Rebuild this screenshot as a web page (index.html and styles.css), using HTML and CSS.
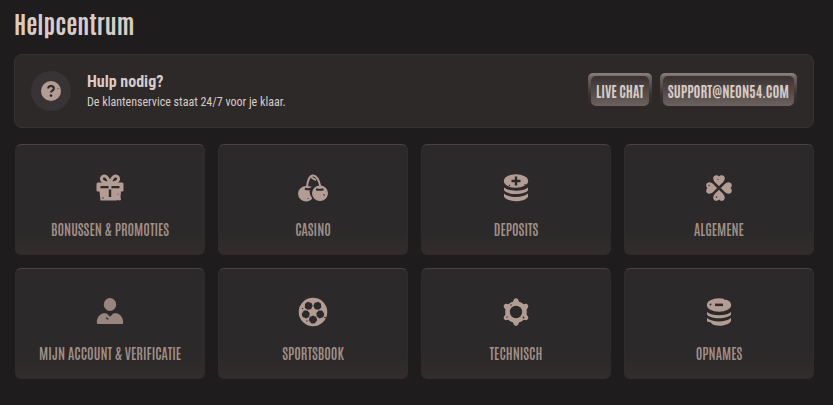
FILE: index.html
```
<!DOCTYPE html>
<html lang="nl">
<head>
    <meta charset="UTF-8">
    <meta name="viewport" content="width=device-width, initial-scale=1.0">
    <title>Helpcentrum</title>
    <link rel="stylesheet" href="styles.css">
</head>
<body>
    <main class="help-center">
        <h1 class="title">Helpcentrum</h1>

        <section class="support">
            <div class="support-icon">
                <svg viewBox="0 0 20 20" width="20" height="20" aria-hidden="true">
                    <circle class="fill" cx="10" cy="10" r="10"/>
                    <path class="cut-line" d="M7.2 7.6C7.2 5.7 8.4 4.9 10 4.9s2.9.9 2.9 2.5c0 1.9-2.8 2.1-2.8 4.2"/>
                    <circle class="cut" cx="10" cy="14.6" r="1.3"/>
                    <circle class="cut" cx="17" cy="7.5" r=".5"/>
                </svg>
            </div>
            <div class="support-text">
                <h2 class="support-title">Hulp nodig?</h2>
                <p class="support-note">De klantenservice staat 24/7 voor je klaar.</p>
            </div>
            <div class="support-actions">
                <button type="button" class="btn"><span class="btn-face">LIVE CHAT</span></button>
                <button type="button" class="btn"><span class="btn-face">SUPPORT@NEON54.COM</span></button>
            </div>
        </section>

        <nav class="topics">
            <a class="card" href="#bonussen">
                <svg class="icon" viewBox="0 0 30 30" aria-hidden="true">
                    <path class="line" d="M14.5 10C10 10 6 8.500 6.500 5.200 7.500 1.500 12.800 2 14.500 10M15.500 10C20 10 24 8.500 23.500 5.200 22.500 1.500 17.200 2 15.500 10"/>
                    <path class="fill" d="M3 9.500h24a1.500 1.500 0 0 1 1.500 1.500v6.500a1 1 0 0 1-1 1H26l-.5 5.500.5 3-2 .6-1-.6-2 .5H5.500L4.500 18.500h-2a1 1 0 0 1-1-1V11A1.500 1.500 0 0 1 3 9.500z"/>
                    <path class="cut" d="M5.500 13h8v2.300h-8zM16.500 13h8v2.300h-8zM13.800 16.500h2.400V24h-2.400z"/>
                    <circle class="cut" cx="8" cy="25" r=".7"/>
                    <circle class="cut" cx="23" cy="21" r=".5"/>
                </svg>
                <span class="label">BONUSSEN &amp; PROMOTIES</span>
            </a>
            <a class="card" href="#casino">
                <svg class="icon" viewBox="0 0 30 30" aria-hidden="true">
                    <path class="line thin" d="M9 14C9.500 9 10.500 3 14.500 2.500 19 2 21 7 22.500 14"/>
                    <path class="line thin" d="M13 3.500c.8 1.500 2 2.500 5 3.500"/>
                    <path class="fill" d="M7.500 13c2 0 3.800.4 6 .6-1.800 2.200-2.300 4.700-1.500 7.500.5 1.800 1.200 2.900 2.400 4.100-1 2-3.500 3.200-6.400 3.200A7.700 7.700 0 1 1 7.500 13z"/>
                    <ellipse class="fill" cx="22" cy="20.300" rx="8" ry="7.700"/>
                    <path class="cut-line" d="M7 15.500c2 1 4 1 6 0M18 16.200c2.600.9 5 .9 7.500 0"/>
                    <circle class="cut" cx="26" cy="22" r=".8"/>
                    <circle class="cut" cx="10" cy="25.500" r=".6"/>
                </svg>
                <span class="label">CASINO</span>
            </a>
            <a class="card" href="#deposits">
                <svg class="icon" viewBox="0 0 30 30" aria-hidden="true">
                    <ellipse class="fill" cx="15" cy="8" rx="12.200" ry="6.800"/>
                    <path class="fill" d="M3 14.500c5 4.300 19 4.300 24 0v2.800c-3.500 5-20.500 5-24 0zM3 20.500c5 4.600 19 4.600 24 0v3.200c-3.500 6-20.500 6-24 0z"/>
                    <path class="cut" d="M13.800 3.500h2.400v3.300H19.500v2.400h-3.300v3.300h-2.400V9.200H10.500V6.800h3.300z"/>
                    <circle class="cut" cx="8.500" cy="12.500" r=".7"/>
                    <circle class="cut" cx="24" cy="11.800" r=".8"/>
                </svg>
                <span class="label">DEPOSITS</span>
            </a>
            <a class="card" href="#algemene">
                <svg class="icon" viewBox="0 0 30 30" aria-hidden="true">
                    <path class="fill" id="leaf" d="M15 13.500C13.800 11.300 9.200 9 9.200 5.300 9.200 2 13.200 1.200 15 3.500 16.800 1.200 20.800 2 20.800 5.300 20.800 9 16.200 11.300 15 13.500z"/>
                    <use href="#leaf" transform="rotate(90 15 15)"/>
                    <use href="#leaf" transform="rotate(180 15 15)"/>
                    <use href="#leaf" transform="rotate(270 15 15)"/>
                    <circle class="cut" cx="14" cy="6.500" r=".6"/>
                    <circle class="cut" cx="5" cy="12.500" r=".7"/>
                    <circle class="cut" cx="12.500" cy="24" r=".8"/>
                </svg>
                <span class="label">ALGEMENE</span>
            </a>
            <a class="card" href="#account">
                <svg class="icon dim" viewBox="0 0 30 30" aria-hidden="true">
                    <ellipse class="fill" cx="15" cy="7.500" rx="6.200" ry="6.500"/>
                    <path class="fill" d="M9 16.200c1.200 0 2.200 0 3 .6l3 3 3-3c.8-.6 1.800-.6 3-.6 4.500.5 7.200 4.500 7.200 9.300 0 1-.7 1.500-1.700 1.500H3.500c-1 0-1.700-.5-1.700-1.500 0-4.800 2.700-8.800 7.200-9.300z"/>
                    <path class="cut" d="M11 20.300l2.700 1.200-.6 1.200-2.200-1.200z"/>
                </svg>
                <span class="label">MIJN ACCOUNT &amp; VERIFICATIE</span>
            </a>
            <a class="card" href="#sportsbook">
                <svg class="icon" viewBox="0 0 30 30" aria-hidden="true">
                    <circle class="fill" cx="15" cy="15" r="14.300"/>
                    <path class="cut" id="patch" d="M11.800 20l3.200-1.500 3.200 1.500 1 3.200-2.600 3.200h-3.200L10.800 23.200z"/>
                    <use href="#patch" transform="rotate(72 15 15)"/>
                    <use href="#patch" transform="rotate(144 15 15)"/>
                    <use href="#patch" transform="rotate(216 15 15)"/>
                    <use href="#patch" transform="rotate(288 15 15)"/>
                    <circle class="cut" cx="9" cy="24" r=".7"/>
                    <circle class="cut" cx="4.500" cy="11.500" r=".7"/>
                    <circle class="cut" cx="27" cy="20.500" r=".8"/>
                </svg>
                <span class="label">SPORTSBOOK</span>
            </a>
            <a class="card" href="#technisch">
                <svg class="icon" viewBox="0 0 30 30" aria-hidden="true">
                    <circle class="fill" cx="15" cy="15" r="10.800"/>
                    <path class="fill" id="tooth" d="M9 7c2.500-.8 3-2 3.500-3.800C13.200.5 16.800.5 17.500 3.200 18 5 18.500 6.200 21 7z"/>
                    <use href="#tooth" transform="rotate(60 15 15)"/>
                    <use href="#tooth" transform="rotate(120 15 15)"/>
                    <use href="#tooth" transform="rotate(180 15 15)"/>
                    <use href="#tooth" transform="rotate(240 15 15)"/>
                    <use href="#tooth" transform="rotate(300 15 15)"/>
                    <circle class="cut" cx="15" cy="15" r="6.200"/>
                    <circle class="cut" cx="10" cy="8" r=".7"/>
                    <circle class="cut" cx="22.500" cy="20.500" r=".9"/>
                    <circle class="cut" cx="6" cy="20" r=".7"/>
                </svg>
                <span class="label">TECHNISCH</span>
            </a>
            <a class="card" href="#opnames">
                <svg class="icon" viewBox="0 0 30 30" aria-hidden="true">
                    <ellipse class="fill" cx="15" cy="8" rx="12.200" ry="6.800"/>
                    <path class="fill" d="M3 15c5 4.300 19 4.300 24 0v2.500c-3.500 5-20.500 5-24 0zM3 21c5 4.600 19 4.600 24 0v3c-3 5.500-15 5.700-19 3l-1-1.500-4-1z"/>
                    <path class="cut" d="M11 6.600h8v2.500h-8z"/>
                    <circle class="cut" cx="6.500" cy="7.500" r=".9"/>
                    <circle class="cut" cx="21" cy="2.200" r=".8"/>
                </svg>
                <span class="label">OPNAMES</span>
            </a>
        </nav>
    </main>
</body>
</html>
```
FILE: styles.css
```
* {
    box-sizing: border-box;
}

body {
    margin: 0;
    background: #1e1c1d;
    color: #d9ccc7;
    font-family: "Roboto Condensed", "Liberation Sans Narrow", "Liberation Sans", sans-serif;
}

.help-center {
    padding: 7px 19px 24px 14px;
}

.title {
    margin: 0 0 15px;
    font-family: Antonio, "Liberation Sans Narrow", "Liberation Sans", sans-serif;
    font-size: 24px;
    line-height: 32px;
}

/* Support panel */
.support {
    display: flex;
    align-items: center;
    gap: 16px;
    padding: 16px;
    border: 1px solid #383333;
    border-radius: 8px;
    background: #2d2929;
}

.support-icon {
    display: flex;
    align-items: center;
    justify-content: center;
    width: 40px;
    height: 40px;
    border-radius: 50%;
    background: #383435;
}

.support-text {
    flex: 1;
}

.support-title {
    margin: 0;
    font-size: 16px;
    line-height: 22px;
}

.support-note {
    margin: 0;
    font-size: 12px;
    line-height: 18px;
}

.support-actions {
    display: flex;
    gap: 8px;
}

.btn {
    height: 36px;
    padding: 3px;
    border: 0;
    border-radius: 5px;
    background: linear-gradient(#8a827f, #6a605e 15%, #3a3230 60%, #2c2625);
    color: #d9ccc7;
    font-family: Antonio, "Liberation Sans Narrow", "Liberation Sans", sans-serif;
    font-size: 14px;
    font-weight: 700;
    white-space: nowrap;
}

.btn-face {
    display: block;
    padding: 0 5px;
    border-radius: 5px;
    background: linear-gradient(#3a3230, #6b625f);
    line-height: 30px;
}

/* Topic cards */
.topics {
    display: grid;
    grid-template-columns: repeat(4, 1fr);
    gap: 13px;
    margin: 16px 0 0 1px;
}

.card {
    display: flex;
    flex-direction: column;
    align-items: center;
    gap: 15px;
    padding: 28px 4px 14px;
    border: 1px solid #302c2c;
    border-top-color: #4a4241;
    border-radius: 6px;
    background: linear-gradient(#2b2929 80%, #322d2c);
    color: #a18f88;
    text-decoration: none;
}

.icon {
    width: 30px;
    height: 30px;
}

.label {
    font-family: Antonio, "Liberation Sans Narrow", "Liberation Sans", sans-serif;
    font-size: 14px;
    font-weight: 600;
    line-height: 22px;
    white-space: nowrap;
}

/* Icon parts */
.fill {
    fill: #b39c94;
}

.dim {
    opacity: 0.8;
}

.line {
    fill: none;
    stroke: #b39c94;
    stroke-width: 3;
}

.thin {
    stroke-width: 2;
}

.cut {
    fill: #2b2929;
}

.cut-line {
    fill: none;
    stroke: #2b2929;
    stroke-width: 2;
}
```
